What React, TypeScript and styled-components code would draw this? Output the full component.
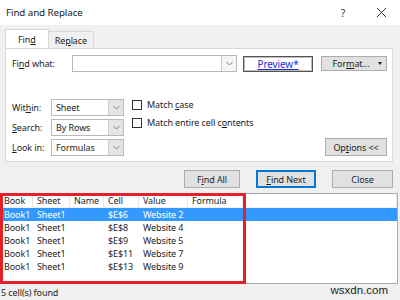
import React from "react";
import styled, { createGlobalStyle } from "styled-components";

const GlobalStyle = createGlobalStyle`
  html, body {
    margin: 0;
    padding: 0;
    background: #f0f0f0;
  }
  body {
    font-family: "Noto Sans", "DejaVu Sans", sans-serif;
    font-size: 9px;
    letter-spacing: -0.1px;
    color: #1e1e1e;
  }
`;

const Window = styled.div`
  width: 400px;
  height: 300px;
  display: flex;
  flex-direction: column;
  background: #f0f0f0;
  overflow: hidden;
`;

const TitleBar = styled.div`
  height: 25px;
  flex: none;
  background: #fff;
  display: flex;
  align-items: center;
  padding-left: 6px;
  font-size: 9.8px;
  color: #222;
`;

const Title = styled.div`
  flex: 1;
`;

const TitleButton = styled.div`
  width: 38px;
  display: flex;
  justify-content: center;
  align-items: center;
  color: #333;
  font-size: 10.5px;
`;

const Body = styled.div`
  padding: 4px 7px 0 5px;
`;

const Tabs = styled.div`
  display: flex;
  align-items: flex-end;
  height: 19px;
`;

const Tab = styled.div<{ active?: boolean }>`
  height: ${({ active }) => (active ? 19 : 17)}px;
  box-sizing: border-box;
  padding: 0 ${({ active }) => (active ? 12 : 6)}px;
  display: flex;
  align-items: center;
  background: ${({ active }) => (active ? "#fff" : "#f0f0f0")};
  border: 1px solid #d9d9d9;
  border-bottom: none;
  margin-right: ${({ active }) => (active ? -1 : 0)}px;
  position: relative;
  z-index: ${({ active }) => (active ? 1 : 0)};
`;

const Panel = styled.div`
  background: #fff;
  border: 1px solid #d9d9d9;
  height: 114px;
  box-sizing: border-box;
  padding: 6px 5px 6px 6px;
  display: flex;
  flex-direction: column;
`;

const FindRow = styled.div`
  display: flex;
  align-items: center;
  height: 17px;
`;

const Label = styled.div<{ w: number }>`
  width: ${({ w }) => w}px;
  flex: none;
`;

const U = styled.span`
  text-decoration: underline;
  text-underline-offset: 1px;
`;

const Combo = styled.div<{ w: number }>`
  width: ${({ w }) => w}px;
  height: 17px;
  box-sizing: border-box;
  border: 1px solid #b9b9b9;
  display: flex;
  background: #fff;
  flex: none;
`;

const ComboText = styled.div`
  flex: 1;
  display: flex;
  align-items: center;
  padding-left: 4px;
`;

const ComboArrow = styled.div<{ grey?: boolean }>`
  width: 14px;
  border-left: 1px solid #cfcfcf;
  background: ${({ grey }) => (grey ? "#e5e5e5" : "#f5f5f5")};
  display: flex;
  align-items: center;
  justify-content: center;
`;

const Preview = styled.div`
  width: 70px;
  height: 16px;
  box-sizing: border-box;
  margin-left: 6px;
  border: 1px solid #555;
  box-shadow: inset 0 0 0 1px #bdbdbd;
  color: #1f2fd8;
  text-decoration: underline;
  display: flex;
  align-items: center;
  justify-content: center;
  font-size: 10px;
`;

const Spacer = styled.div<{ w: number }>`
  width: ${({ w }) => w}px;
  flex: none;
`;

const Button = styled.div<{ w: number; h?: number; primary?: boolean }>`
  width: ${({ w }) => w}px;
  height: ${({ h }) => h ?? 18}px;
  box-sizing: border-box;
  background: #e1e1e1;
  border: 1px solid ${({ primary }) => (primary ? "#0078d7" : "#adadad")};
  box-shadow: ${({ primary }) => (primary ? "inset 0 0 0 1px #0078d7" : "none")};
  display: flex;
  align-items: center;
  justify-content: center;
  position: relative;
  flex: none;
`;

const ButtonText = styled.span<{ shift?: number }>`
  margin-right: ${({ shift }) => shift ?? 0}px;
`;

const Caret = styled.span`
  position: absolute;
  right: 4px;
  top: 5px;
  width: 0;
  height: 0;
  border-left: 2.5px solid transparent;
  border-right: 2.5px solid transparent;
  border-top: 3px solid #222;
`;

const Lower = styled.div`
  display: flex;
  margin-top: 27px;
  flex: 1;
`;

const Fields = styled.div`
  display: flex;
  flex-direction: column;
  gap: 3px;
`;

const FieldRow = styled.div`
  display: flex;
  align-items: center;
`;

const Checks = styled.div`
  display: flex;
  flex-direction: column;
  gap: 7px;
  margin-left: 8px;
`;

const CheckRow = styled.div`
  display: flex;
  align-items: center;
  gap: 5px;
  height: 11px;
`;

const Box = styled.div`
  width: 10px;
  height: 10px;
  box-sizing: border-box;
  border: 1px solid #333;
  background: #fff;
`;

const OptionsWrap = styled.div`
  flex: 1;
  display: flex;
  justify-content: flex-end;
  align-items: flex-end;
`;

const ActionRow = styled.div`
  display: flex;
  justify-content: flex-end;
  gap: 16px;
  padding: 8px 6px 0 0;
  height: 18px;
  margin-right: -6px;
  margin-left: -5px;
`;

const ListOuter = styled.div`
  position: relative;
  margin-top: 5px;
  height: 91px;
  width: 398px;
  box-sizing: border-box;
  background: #fff;
  border: 1px solid #ababab;
  border-left: none;
`;

const Grid = styled.div`
  display: grid;
  grid-template-columns: 33px 37px 34px 35px 49px 55px 1fr;
`;

const HeadCell = styled.div`
  height: 13px;
  line-height: 13px;
  padding-left: 4px;
  border-right: 1px solid #e5e5e5;
  border-bottom: 1px solid #f0f0f0;
  white-space: nowrap;
  overflow: hidden;
`;

const Row = styled.div<{ selected?: boolean }>`
  display: contents;
  & > div {
    background: ${({ selected }) => (selected ? "#3399ff" : "transparent")};
    color: ${({ selected }) => (selected ? "#fff" : "#1e1e1e")};
  }
`;

const Cell = styled.div`
  height: 13px;
  line-height: 13px;
  padding-left: 4px;
  white-space: nowrap;
`;

const Highlight = styled.div`
  position: absolute;
  left: 0;
  top: -1px;
  width: 246px;
  height: 91px;
  box-sizing: border-box;
  border: 3px solid #e3212b;
  pointer-events: none;
`;

const StatusBar = styled.div`
  flex: 1;
  display: flex;
  align-items: center;
  padding-left: 1px;
  position: relative;
`;

const Watermark = styled.div`
  position: absolute;
  right: 12px;
  top: 0px;
  font-size: 11.5px;
  letter-spacing: 0;
  color: #222;
  font-family: "Liberation Sans", Arial, sans-serif;
`;

const Chevron = () => (
  <svg width="7" height="5" viewBox="0 0 7 5">
    <path d="M0.5 1 L3.5 4 L6.5 1" fill="none" stroke="#777" strokeWidth="0.9" />
  </svg>
);

const rows = [
  ["Book1", "Sheet1", "", "$E$6", "Website 2", ""],
  ["Book1", "Sheet1", "", "$E$8", "Website 4", ""],
  ["Book1", "Sheet1", "", "$E$9", "Website 5", ""],
  ["Book1", "Sheet1", "", "$E$11", "Website 7", ""],
  ["Book1", "Sheet1", "", "$E$13", "Website 9", ""],
];

const headers = ["Book", "Sheet", "Name", "Cell", "Value", "Formula", ""];

const fields = [
  { label: <>Wit<U>h</U>in:</>, value: "Sheet" },
  { label: <><U>S</U>earch:</>, value: "By Rows" },
  { label: <><U>L</U>ook in:</>, value: "Formulas" },
];

export default function App() {
  return (
    <Window>
      <GlobalStyle />
      <TitleBar>
        <Title>Find and Replace</Title>
        <TitleButton>?</TitleButton>
        <TitleButton>
          <svg width="11" height="11" viewBox="0 0 11 11">
            <path d="M1 1 L10 10 M10 1 L1 10" stroke="#333" strokeWidth="1" />
          </svg>
        </TitleButton>
      </TitleBar>
      <Body>
        <Tabs>
          <Tab active>
            <span>Fin<U>d</U></span>
          </Tab>
          <Tab>
            <span>Re<U>p</U>lace</span>
          </Tab>
        </Tabs>
        <Panel>
          <FindRow>
            <Label w={60}>
              Fi<U>n</U>d what:
            </Label>
            <Combo w={165}>
              <ComboText />
              <ComboArrow>
                <Chevron />
              </ComboArrow>
            </Combo>
            <Preview>Preview*</Preview>
            <Spacer w={8} />
            <Button w={66} h={15}>
              <ButtonText shift={6}>
                For<U>m</U>at...
              </ButtonText>
              <Caret />
            </Button>
          </FindRow>
          <Lower>
            <Fields>
              {fields.map((f, i) => (
                <FieldRow key={i}>
                  <Label w={39}>{f.label}</Label>
                  <Combo w={73}>
                    <ComboText>{f.value}</ComboText>
                    <ComboArrow grey>
                      <Chevron />
                    </ComboArrow>
                  </Combo>
                </FieldRow>
              ))}
            </Fields>
            <Checks>
              <CheckRow>
                <Box />
                <span>Match <U>c</U>ase</span>
              </CheckRow>
              <CheckRow>
                <Box />
                <span>Match entire cell c<U>o</U>ntents</span>
              </CheckRow>
            </Checks>
            <OptionsWrap>
              <Button w={62}>
                <ButtonText>Op<U>t</U>ions &lt;&lt;</ButtonText>
              </Button>
            </OptionsWrap>
          </Lower>
        </Panel>
        <ActionRow>
          <Button w={56}>
            <ButtonText>F<U>i</U>nd All</ButtonText>
          </Button>
          <Button w={60} primary>
            <ButtonText><U>F</U>ind Next</ButtonText>
          </Button>
          <Button w={61}>
            <ButtonText>Close</ButtonText>
          </Button>
        </ActionRow>
      </Body>
      <ListOuter>
        <Grid>
          {headers.map((h, i) => (
            <HeadCell key={i}>{h}</HeadCell>
          ))}
          {rows.map((r, i) => (
            <Row key={i} selected={i === 0}>
              {r.map((c, j) => (
                <Cell key={j}>{c}</Cell>
              ))}
              <Cell />
            </Row>
          ))}
        </Grid>
        <Highlight />
      </ListOuter>
      <StatusBar>
        5 cell(s) found
        <Watermark>wsxdn.com</Watermark>
      </StatusBar>
    </Window>
  );
}
